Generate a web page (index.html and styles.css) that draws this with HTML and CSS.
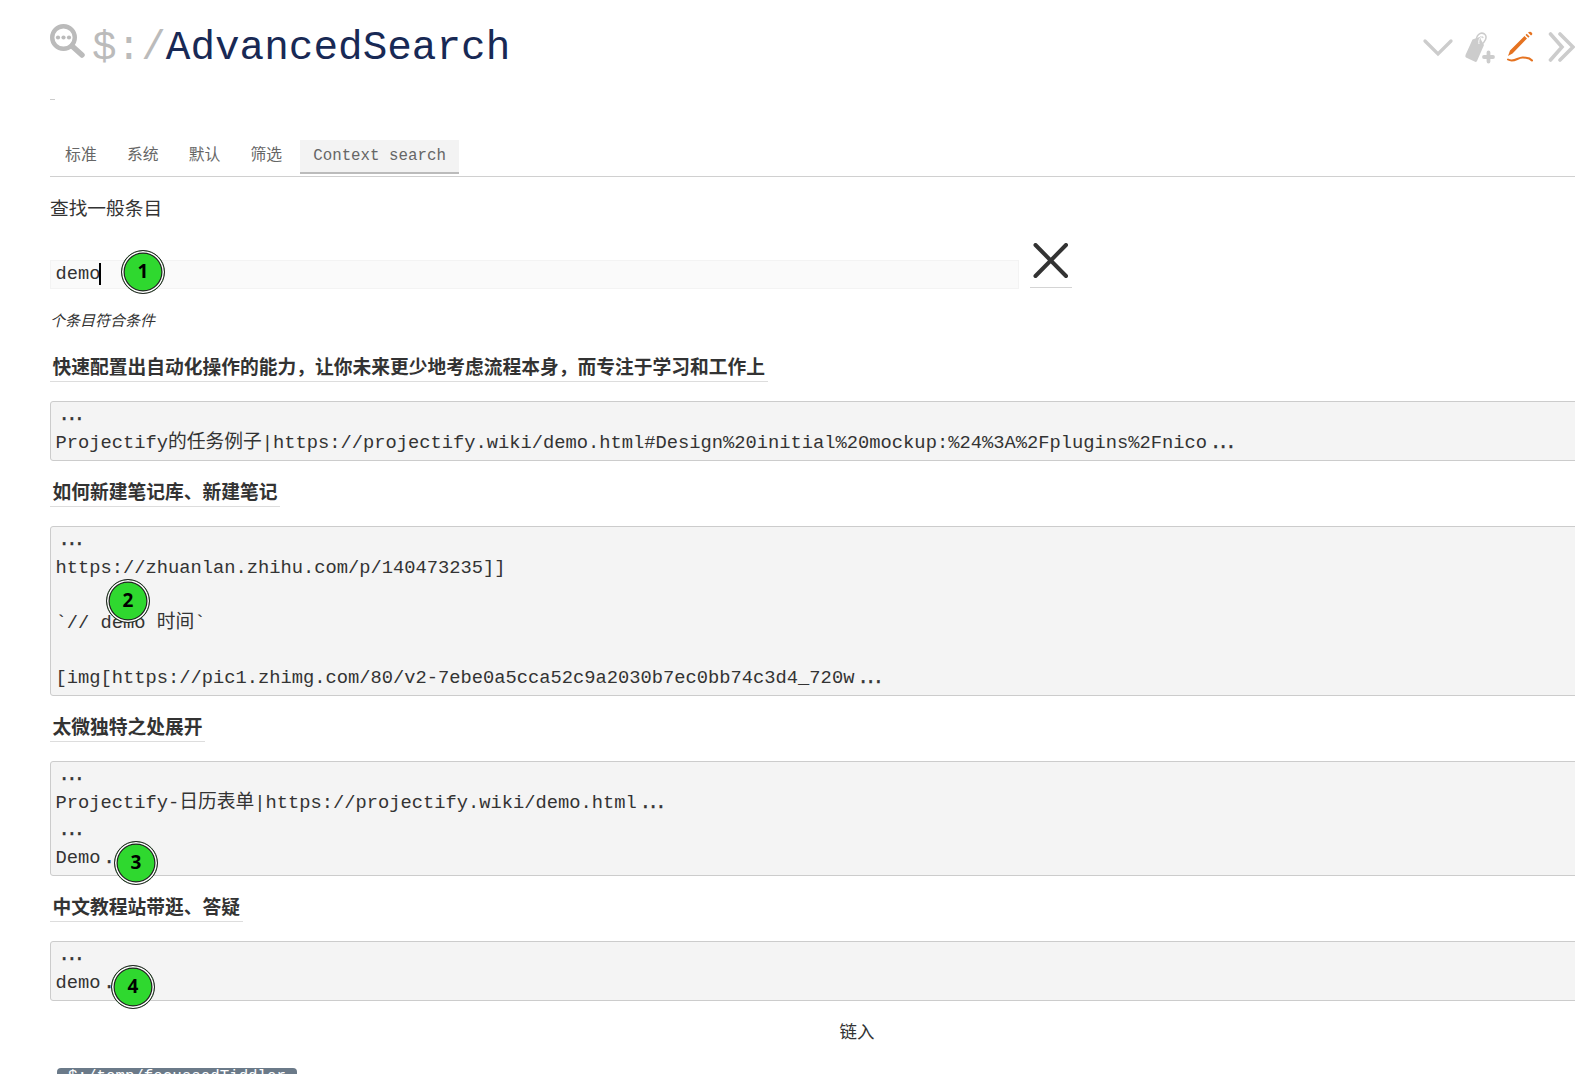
FILE: index.html
```html
<!DOCTYPE html>
<html lang="zh">
<head>
<meta charset="utf-8">
<title>$:/AdvancedSearch</title>
<link rel="stylesheet" href="styles.css">
</head>
<body>
<main class="tiddler">
  <header class="title-bar">
    <svg class="title-icon" viewBox="0 0 36 36"><circle cx="13.5" cy="13.5" r="11.300" fill="none" stroke="#bbb" stroke-width="4.400"/><path d="M22 22L32 31" stroke="#bbb" stroke-width="5.500" stroke-linecap="round"/><g fill="#bbb"><circle cx="8" cy="13.500" r="2.100"/><circle cx="13.500" cy="13.500" r="2.100"/><circle cx="19" cy="13.500" r="2.100"/></g></svg>
    <h1 class="title"><span class="prefix">$:/</span>AdvancedSearch</h1>
    <div class="controls">
      <svg width="30" height="30" viewBox="0 0 30 30"><path d="M2 9L15 22L28 9" fill="none" stroke="#ccc" stroke-width="3.300" stroke-linecap="round"/></svg>
      <svg width="30" height="30" viewBox="0 0 30 30"><path d="M8.500 7.500L15.500 5L20 13L13 29Q12 30.500 10.500 29.500L2 25.500Q1 25 1.500 23Z" fill="#ccc"/><path d="M12.500 10C11.500 3 16.500 -0.500 20.500 2C24 5 21 10 17 13M15 11C14 6 18 3 19 6" fill="none" stroke="#ccc" stroke-width="1.500"/><path d="M15 12C14 7 17 4 18.500 5" fill="none" stroke="#fff" stroke-width="1"/><path d="M24.500 20.500V29.500M20 25H29" stroke="#ccc" stroke-width="3.800" stroke-linecap="round"/></svg>
      <svg width="30" height="30" viewBox="0 0 30 30"><path d="M3 24L5 18.500L19.500 4L22 6.500L7.500 21.500Z M20.500 3L21.700 1.800L24.600 4.500L23.300 5.800Z M23 0.500Q25.500 -1 27 1Q28 2.500 26 3.500Z" fill="#e57321"/><path d="M3 27.500C9 31 13 25 18 25.500S24 25 27 28.500" fill="none" stroke="#e57321" stroke-width="2" stroke-linecap="round"/></svg>
      <svg width="30" height="30" viewBox="0 0 30 30"><path d="M4.500 2L16 15L4.500 28M14 2L27 15L14 28" fill="none" stroke="#ccc" stroke-width="3.600" stroke-linecap="round"/></svg>
    </div>
  </header>
  <div class="subtitle"></div>
  <nav class="tabs"><span class="tab">标准</span><span class="tab">系统</span><span class="tab">默认</span><span class="tab">筛选</span><span class="tab active">Context search</span></nav>
  <p class="hint">查找一般条目</p>
  <div class="search">
    <div class="field">demo<i class="caret"></i></div>
    <div class="clear"><svg width="36" height="36" viewBox="0 0 36 36"><path d="M2.500 2L33 33M33 2L2.500 33" stroke="#333" stroke-width="4" stroke-linecap="round"/></svg></div>
  </div>
  <p class="count">个条目符合条件</p>
  <h2 class="result"><a>快速配置出自动化操作的能力，让你未来更少地考虑流程本身，而专注于学习和工作上</a></h2>
  <pre class="context"><span class="dots">...</span>
Projectify的任务例子|https://projectify.wiki/demo.html#Design%20initial%20mockup:%24%3A%2Fplugins%2Fnico<span class="dots">...</span></pre>
  <h2 class="result"><a>如何新建笔记库、新建笔记</a></h2>
  <pre class="context"><span class="dots">...</span>
https://zhuanlan.zhihu.com/p/140473235]]

`// demo 时间`

[img[https://pic1.zhimg.com/80/v2-7ebe0a5cca52c9a2030b7ec0bb74c3d4_720w<span class="dots">...</span></pre>
  <h2 class="result"><a>太微独特之处展开</a></h2>
  <pre class="context"><span class="dots">...</span>
Projectify-日历表单|https://projectify.wiki/demo.html<span class="dots">...</span>
<span class="dots">...</span>
Demo<span class="dots">...</span></pre>
  <h2 class="result"><a>中文教程站带逛、答疑</a></h2>
  <pre class="context"><span class="dots">...</span>
demo<span class="dots">...</span></pre>
  <div class="links-title">链入</div>
  <a class="pill">$:/temp/focussedTiddler</a>
</main>
<b class="badge b1">1</b>
<b class="badge b2">2</b>
<b class="badge b3">3</b>
<b class="badge b4">4</b>
</body>
</html>
```
FILE: styles.css
```css
* { box-sizing: border-box; }
html { overflow: hidden; }
body {
  margin: 0;
  height: 1074px;
  overflow: hidden;
  position: relative;
  background: #fff;
  color: #333;
  font: 18.7px/27.5px "Liberation Mono", "Noto Sans CJK SC", monospace;
}
.tiddler { width: 1614px; margin-left: 50px; }
.title-bar { display: flex; height: 98px; padding-top: 20px; align-items: flex-start; }
.title-icon { width: 36px; height: 36px; margin-top: 4px; flex: none; }
.title { margin: 3px 0 0 6px; font-size: 41px; line-height: 50px; font-weight: 400; color: #182955; }
.prefix { color: #bbb; }
.controls { display: flex; gap: 11px; margin: 12px 0 0 913px; }
.controls svg { flex: none; overflow: visible; }
.subtitle { width: 5px; height: 2px; border-top: 1px solid #ccc; margin-top: 1px; }
.tabs { display: flex; height: 76px; padding-top: 39px; border-bottom: 1px solid #d0d0d0; font-size: 15.8px; color: #666; }
.tab { height: 34px; padding: 0 15.1px; line-height: 32px; }
.tab.active { margin-left: 3px; padding: 0 13px; width: 159px; background: #f3f3f3; border-bottom: 2px solid #bbb; }
.hint { margin: 20px 0 0; }
.search { display: flex; align-items: flex-end; height: 61px; margin-top: 2px; }
.field { width: 969px; height: 29px; margin-right: 11px; padding-left: 4.5px; border: 1px solid #f3f3f3; background: #fafafa; line-height: 26px; margin-bottom: -1px; }
.caret { display: inline-block; width: 2px; height: 22px; background: #000; vertical-align: -6px; margin-left: -1px; }
.clear { width: 42px; height: 45px; padding-left: 3px; border-bottom: 1px solid #d4d4d4; }
.clear svg { display: block; }
.count { margin: 21px 0 0; font-size: 15px; line-height: 27px; font-style: italic; }
.result { margin: 0; padding-top: 20px; height: 65px; font-size: 18.75px; line-height: 27px; font-weight: 700; }
.result a { display: inline-block; height: 26px; padding: 0 2.5px; border-bottom: 1px solid #ddd; }
.context { margin: 0; padding: 0.5px 5px 2.5px 4.5px; border: 1px solid #ccc; border-radius: 3px; background: #f4f4f4; font: inherit; font-size: 18.76px; }
.dots { display: inline-block; width: 33.76px; padding-left: 3px; letter-spacing: -3.6px; height: 27px; vertical-align: top; -webkit-text-stroke: 0.4px; }
.links-title { margin-top: 19px; text-align: center; font-size: 17.5px; }
.pill { display: block; width: 240px; height: 30px; margin: 21px 0 0 7px; padding-left: 11px; border-radius: 4px; background: #6b7a89; color: #fff; font-size: 15.8px; line-height: 19px; }
.badge {
  position: absolute;
  width: 44px;
  height: 44px;
  border: 1px solid #222;
  border-radius: 50%;
  background: #2fd82f;
  box-shadow: inset 0 0 0 1.5px #fff, inset 0 0 0 2.700px #222;
  color: #000;
  font: 700 19px/41px "Noto Sans", sans-serif;
  text-align: center;
}
.b1 { left: 121px; top: 250px; }
.b2 { left: 106px; top: 579px; }
.b3 { left: 114px; top: 841px; }
.b4 { left: 111px; top: 965px; }
```
